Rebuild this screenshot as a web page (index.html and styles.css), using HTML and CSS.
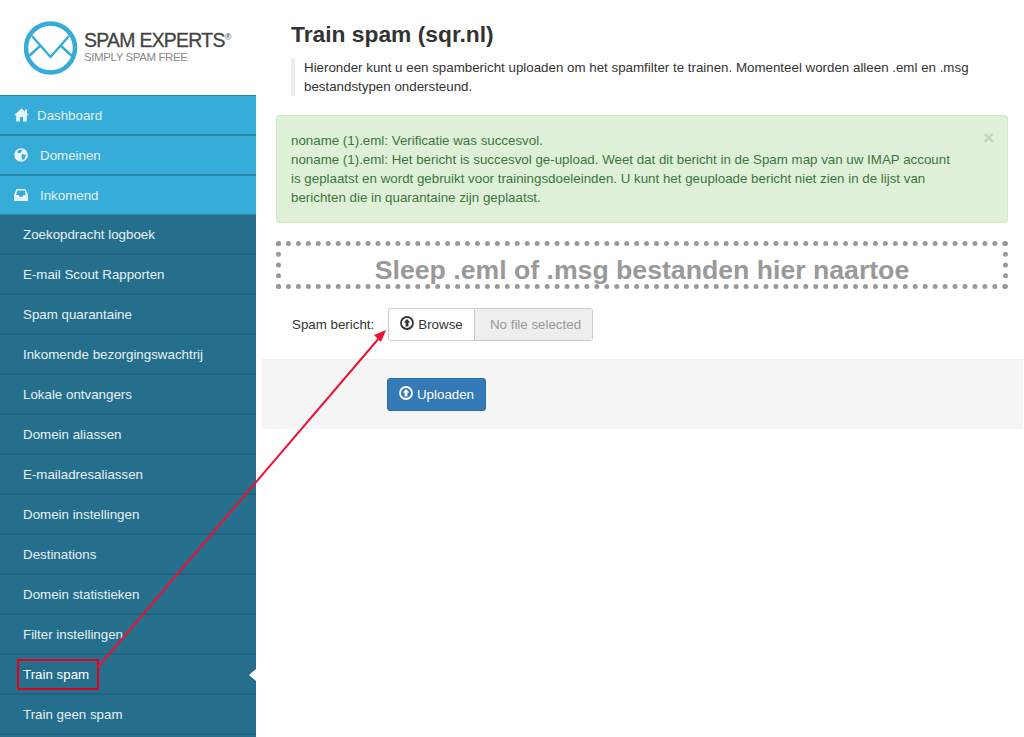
FILE: index.html
```html
<!DOCTYPE html>
<html lang="en">
<head>
    <meta charset="UTF-8">
    <title>Train spam</title>
    <link rel="stylesheet" href="styles.css">
</head>
<body>

<div class="page">
    <aside class="sidebar">
        <div class="logo">
            <svg class="logo-mark" width="54" height="54" viewBox="0 0 54 54">
                <circle cx="26.5" cy="27" r="24.5" fill="none" stroke="#36acd8" stroke-width="4.5"/>
                <path d="M8 15 L26.5 36 L45 15 M5 35 L16 25 M37 25 L48 35" fill="none" stroke="#36acd8" stroke-width="2.4"/>
            </svg>
            <div class="logo-text">
                <div class="logo-name">SPAM EXPERTS<sup>®</sup></div>
                <div class="logo-tag">SIMPLY SPAM FREE</div>
            </div>
        </div>
        <ul class="menu">
            <li class="top"><svg class="ico" width="15" height="14" viewBox="0 0 15 14"><path d="M7.5 0.5 L11 3.6 V1.5 H13 V5.3 L15 7.2 H12.8 V13.5 H9 V9 H6 V13.5 H2.2 V7.2 H0Z" fill="#e8f4fa"/></svg>Dashboard</li>
            <li class="top"><svg class="ico wide" width="14" height="14" viewBox="0 0 14 14"><circle cx="7" cy="7" r="6.8" fill="#e8f4fa"/><path d="M5 2 L8 1.5 L7.5 4 L5 5.5 L3 4Z M8 6 L12 7 L10.5 11 L8.5 12 L7.5 9Z" fill="#36acd8"/></svg>Domeinen</li>
            <li class="top"><svg class="ico wide" width="14" height="14" viewBox="0 0 14 14"><path d="M2.5 1 H11.5 L14 7 V13 H0 V7Z" fill="#e8f4fa"/><path d="M3.4 2.6 H10.6 L12 7 H9.5 L8.6 8.8 H5.4 L4.5 7 H2Z" fill="#36acd8"/></svg>Inkomend</li>
            <li class="sub">Zoekopdracht logboek</li>
            <li class="sub">E-mail Scout Rapporten</li>
            <li class="sub">Spam quarantaine</li>
            <li class="sub">Inkomende bezorgingswachtrij</li>
            <li class="sub">Lokale ontvangers</li>
            <li class="sub">Domein aliassen</li>
            <li class="sub">E-mailadresaliassen</li>
            <li class="sub">Domein instellingen</li>
            <li class="sub">Destinations</li>
            <li class="sub">Domein statistieken</li>
            <li class="sub">Filter instellingen</li>
            <li class="sub active">Train spam</li>
            <li class="sub">Train geen spam</li>
        </ul>
    </aside>

    <main class="content">
        <div class="head">
            <h1>Train spam (sqr.nl)</h1>
            <p class="intro">Hieronder kunt u een spambericht uploaden om het spamfilter te trainen. Momenteel worden alleen .eml en .msg bestandstypen ondersteund.</p>
        </div>

        <div class="alert">
            <span class="close">×</span>
            noname (1).eml: Verificatie was succesvol.<br>
            noname (1).eml: Het bericht is succesvol ge-upload. Weet dat dit bericht in de Spam map van uw IMAP account is geplaatst en wordt gebruikt voor trainingsdoeleinden. U kunt het geuploade bericht niet zien in de lijst van berichten die in quarantaine zijn geplaatst.
        </div>

        <div class="dropzone">Sleep .eml of .msg bestanden hier naartoe</div>

        <div class="field">
            <label>Spam bericht:</label>
            <div class="file">
                <span class="browse"><svg class="up" width="14" height="14" viewBox="0 0 14 14"><circle cx="7" cy="7" r="6" fill="none" stroke="#333" stroke-width="1.8"/><path d="M7 3 L10.3 6.6 H8.4 V10.4 H5.6 V6.6 H3.7Z" fill="#333"/></svg>Browse</span>
                <span class="filename">No file selected</span>
            </div>
        </div>

        <div class="actions">
            <button class="upload"><svg class="up" width="14" height="14" viewBox="0 0 14 14"><circle cx="7" cy="7" r="6" fill="none" stroke="#fff" stroke-width="1.8"/><path d="M7 3 L10.3 6.6 H8.4 V10.4 H5.6 V6.6 H3.7Z" fill="#fff"/></svg>Uploaden</button>
        </div>
    </main>
</div>

<!-- red annotation drawn over the screenshot -->
<svg class="annotation" width="1024" height="737" viewBox="0 0 1024 737">
    <rect x="18" y="660" width="80" height="29" fill="none" stroke="#e2001a" stroke-width="2"/>
    <line x1="98" y1="667" x2="380" y2="337" stroke="#ee1133" stroke-width="2"/>
    <path d="M386 330 L374 335 L381 342Z" fill="#ee1133"/>
</svg>

</body>
</html>
```

FILE: styles.css
```css
html, body {
    height: 737px;
    overflow: hidden;
}
body {
    font-family: 'Liberation Sans', Arial, sans-serif;
    font-size: 13.33px;
    color: #333;
    background-color: #fff;
    margin: 0;
}
.page {
    display: flex;
    align-items: stretch;
    height: 737px;
}
.sidebar {
    width: 256px;
    flex-shrink: 0;
    display: flex;
    flex-direction: column;
}
.logo {
    height: 95px;
    flex-shrink: 0;
    display: flex;
    align-items: center;
    gap: 6px;
    padding-left: 24px;
    box-sizing: border-box;
}
.logo-text {
    padding-top: 2px;
}
.logo-name {
    font-size: 19.4px;
    letter-spacing: -0.7px;
    color: #444;
    line-height: 18px;
    -webkit-text-stroke: 0.3px #444;
}
.logo-name sup {
    font-size: 9px;
    line-height: 0;
    vertical-align: 7px;
    letter-spacing: 0;
    -webkit-text-stroke: 0;
}
.logo-tag {
    font-size: 11.5px;
    letter-spacing: -0.4px;
    color: #8a8a8a;
    line-height: 17px;
}
.menu {
    flex: 1;
    list-style: none;
    margin: 0;
    padding: 0;
    background-color: #256f8d;
    border-top: 1px solid #2a7f9e;
}
.menu li {
    height: 40px;
    line-height: 39px;
    box-sizing: border-box;
    color: #e6f1f5;
    position: relative;
}
.top {
    background-color: #36acd8;
    padding-left: 14px;
    border-bottom: 2px solid #2a88ab;
}
.menu .sub {
    background-color: #256f8d;
    padding-left: 23px;
    border-bottom: 2px solid #1f6380;
}
.top + .sub {
    margin-top: -1px;
}
.ico {
    vertical-align: -2px;
    margin-right: 8px;
}
.ico.wide {
    margin-right: 12px;
}
.menu .active {
    color: #fff;
}
.active::after {
    content: "";
    position: absolute;
    right: 0;
    top: 14px;
    border: 6px solid transparent;
    border-right: 7px solid #fff;
    border-left: 0;
}
.content {
    flex: 1;
    padding-left: 6px;
    margin-right: 1px;
    min-width: 0;
}
.head {
    padding: 21px 0 0 29px;
}
h1 {
    font-size: 22.8px;
    font-weight: bold;
    line-height: 26px;
    margin: 0 0 11px;
    color: #333;
}
.intro {
    margin: 0 46px 19px 0;
    padding-left: 9px;
    border-left: 4px solid #eee;
    line-height: 19px;
}
.alert {
    position: relative;
    margin: 0 15px 0 14px;
    padding: 15px 52px 15px 14px;
    background-color: #dff0d8;
    border: 1px solid #d6e9c6;
    border-radius: 3px;
    color: #3c763d;
    line-height: 19px;
}
.close {
    position: absolute;
    right: 13px;
    top: 12px;
    font-size: 19px;
    font-weight: bold;
    color: #c3d2b6;
    line-height: 20px;
}
.dropzone {
    margin: 18px 15px 0 14px;
    height: 48px;
    border: 5px dotted #999;
    border-radius: 2px;
    box-sizing: border-box;
    text-align: center;
    font-size: 26.65px;
    font-weight: bold;
    line-height: 49px;
    color: #999;
}
.field {
    display: flex;
    align-items: center;
    margin: 19px 0 18px 30px;
}
.field label {
    width: 96px;
}
.file {
    display: flex;
    height: 33px;
    box-sizing: border-box;
    border: 1px solid #ccc;
    border-radius: 3px;
    line-height: 31px;
}
.browse {
    width: 85px;
    text-align: center;
    border-right: 1px solid #ccc;
}
.up {
    vertical-align: -1px;
    margin-right: 4px;
}
.filename {
    width: 113px;
    padding-left: 4px;
    text-align: center;
    color: #999;
    background-color: #eee;
}
.actions {
    background-color: #f5f5f5;
    border-top: 1px solid #eee;
    height: 70px;
    box-sizing: border-box;
    padding: 18px 0 0 125px;
}
.upload {
    height: 33px;
    width: 99px;
    padding: 0 0 2px;
    font: inherit;
    color: #fff;
    background-color: #337ab7;
    border: 1px solid #2e6da4;
    border-radius: 3px;
}
.annotation {
    position: absolute;
    left: 0;
    top: 0;
    pointer-events: none;
}
```
